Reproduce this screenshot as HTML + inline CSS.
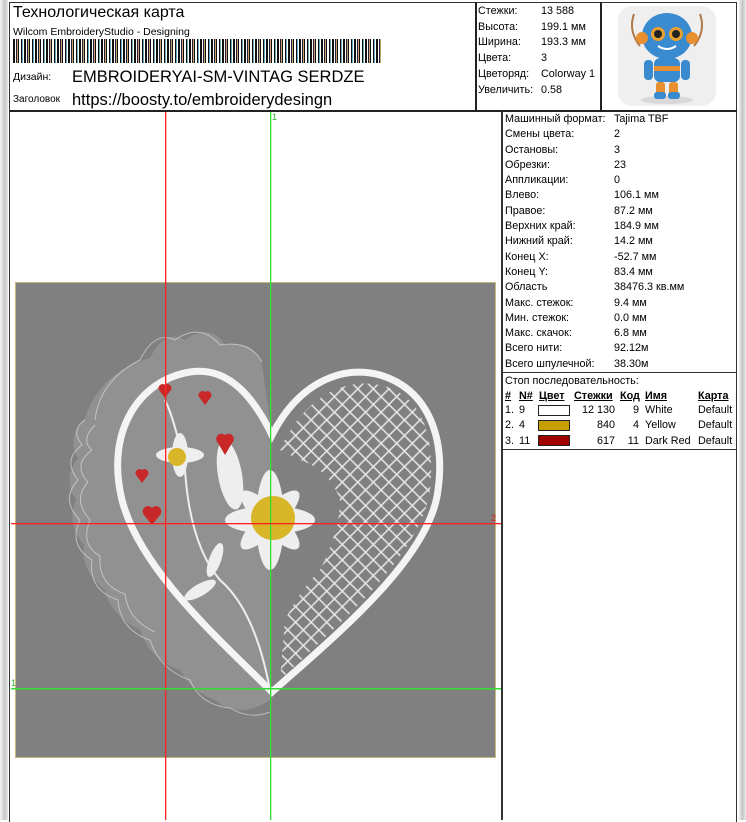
<!DOCTYPE html>
<html><head><meta charset="utf-8"><style>
*{margin:0;padding:0;box-sizing:border-box}
body{width:746px;height:820px;background:#fff;font-family:"Liberation Sans",Arial,sans-serif;color:#000;position:relative;overflow:hidden}
.abs{position:absolute}
.s{font-size:10.8px;line-height:15.3px;white-space:nowrap}
</style></head><body>
<div class="abs" style="left:0;top:0;width:8px;height:820px;background:linear-gradient(90deg,#f4f4f4,#c8c8c8 60%,#e8e8e8)"></div>
<div class="abs" style="left:739px;top:0;width:7px;height:820px;background:linear-gradient(90deg,#f0f0f0,#c4c4c4 50%,#ececec)"></div>
<div class="abs" style="left:9px;top:2px;width:728px;height:820px;border:1.5px solid #333;border-bottom:none"></div>
<div class="abs" style="left:9px;top:110px;width:728px;height:2px;background:#222"></div>
<div class="abs" style="left:475px;top:2px;width:2px;height:109px;background:#222"></div>
<div class="abs" style="left:600px;top:2px;width:1.5px;height:109px;background:#222"></div>
<div class="abs" style="left:501px;top:111px;width:1.5px;height:709px;background:#333"></div>
<div class="abs" style="left:502px;top:372px;width:235px;height:1px;background:#333"></div>
<div class="abs" style="left:502px;top:449px;width:235px;height:1px;background:#333"></div>

<div class="abs" style="left:13px;top:4px;font-size:16px">Технологическая карта</div>
<div class="abs" style="left:13px;top:26px;font-size:10.5px">Wilcom EmbroideryStudio - Designing</div>
<div class="abs" style="left:13px;top:39px;width:368px;height:24px;background:repeating-linear-gradient(90deg,#111 0 2px,#fff 2px 3px,#223 3px 4px,#c8a070 4px 5px,#111 5px 6px,#fff 6px 8px,#111 8px 9px,#6ab 9px 10px,#fff 10px 11px),repeating-linear-gradient(90deg,transparent 0 7px,#fff 7px 8px,transparent 8px 13px)"></div>
<div class="abs" style="left:13px;top:71px;font-size:10.5px">Дизайн:</div>
<div class="abs" style="left:72px;top:68px;font-size:16.5px">EMBROIDERYAI-SM-VINTAG SERDZE</div>
<div class="abs" style="left:13px;top:94px;font-size:10px">Заголовок</div>
<div class="abs" style="left:72px;top:91px;font-size:16.5px">https://boosty.to/embroiderydesingn</div>

<div class="abs s" style="left:478px;top:4px;line-height:15.7px">Стежки:<br>Высота:<br>Ширина:<br>Цвета:<br>Цветоряд:<br>Увеличить:</div>
<div class="abs s" style="left:541px;top:4px;line-height:15.7px">13 588<br>199.1 мм<br>193.3 мм<br>3<br>Colorway 1<br>0.58</div>

<svg class="abs" style="left:618px;top:6px" width="98" height="100" viewBox="0 0 98 100">
<rect x="0" y="0" width="98" height="100" rx="14" fill="#efefef"/>
<ellipse cx="49" cy="94" rx="26" ry="4" fill="#d8d8d8"/>
<path d="M22 40 Q10 25 16 8 M76 40 Q88 25 82 8" stroke="#b07848" stroke-width="2" fill="none"/>
<ellipse cx="49" cy="30" rx="25" ry="23" fill="#3a8ad0"/>
<circle cx="24" cy="32" r="6" fill="#e89030"/><circle cx="74" cy="32" r="6" fill="#e89030"/>
<circle cx="40" cy="28" r="7" fill="#e8a030"/><circle cx="58" cy="28" r="7" fill="#e8a030"/>
<circle cx="40" cy="28" r="4" fill="#222"/><circle cx="58" cy="28" r="4" fill="#222"/>
<path d="M40 40 Q49 46 58 40" stroke="#fff" stroke-width="2" fill="none"/>
<rect x="36" y="52" width="26" height="24" rx="6" fill="#3a8ad0"/>
<rect x="36" y="60" width="26" height="5" fill="#e89030"/>
<rect x="26" y="54" width="9" height="20" rx="4" fill="#3a8ad0"/><rect x="63" y="54" width="9" height="20" rx="4" fill="#3a8ad0"/>
<rect x="38" y="76" width="9" height="16" rx="3" fill="#e89030"/><rect x="51" y="76" width="9" height="16" rx="3" fill="#e89030"/>
<rect x="36" y="86" width="12" height="7" rx="3" fill="#3a8ad0"/><rect x="50" y="86" width="12" height="7" rx="3" fill="#3a8ad0"/>
</svg>

<div class="abs s" style="left:505px;top:112px">Машинный формат:<br>Смены цвета:<br>Остановы:<br>Обрезки:<br>Аппликации:<br>Влево:<br>Правое:<br>Верхних край:<br>Нижний край:<br>Конец X:<br>Конец Y:<br>Область<br>Макс. стежок:<br>Мин. стежок:<br>Макс. скачок:<br>Всего нити:<br>Всего шпулечной:</div>
<div class="abs s" style="left:614px;top:112px">Tajima TBF<br>2<br>3<br>23<br>0<br>106.1 мм<br>87.2 мм<br>184.9 мм<br>14.2 мм<br>-52.7 мм<br>83.4 мм<br>38476.3 кв.мм<br>9.4 мм<br>0.0 мм<br>6.8 мм<br>92.12м<br>38.30м</div>

<div class="abs s" style="left:505px;top:374px">Стоп последовательность:</div>
<div class="abs s" style="left:505px;top:389px;text-decoration:underline;font-weight:bold">#</div>
<div class="abs s" style="left:519px;top:389px;text-decoration:underline;font-weight:bold">N#</div>
<div class="abs s" style="left:539px;top:389px;text-decoration:underline;font-weight:bold">Цвет</div>
<div class="abs s" style="left:574px;top:389px;text-decoration:underline;font-weight:bold">Стежки</div>
<div class="abs s" style="left:620px;top:389px;text-decoration:underline;font-weight:bold">Код</div>
<div class="abs s" style="left:645px;top:389px;text-decoration:underline;font-weight:bold">Имя</div>
<div class="abs s" style="left:698px;top:389px;text-decoration:underline;font-weight:bold">Карта</div>
<div class="abs s" style="left:505px;top:403px">1.<br>2.<br>3.</div>
<div class="abs s" style="left:519px;top:403px">9<br>4<br>11</div>
<div class="abs" style="left:538px;top:405px;width:32px;height:11px;border:1px solid #222;background:#fff"></div>
<div class="abs" style="left:538px;top:420px;width:32px;height:11px;border:1px solid #222;background:#c79e00"></div>
<div class="abs" style="left:538px;top:435px;width:32px;height:11px;border:1px solid #222;background:#a00000"></div>
<div class="abs s" style="left:570px;top:403px;width:45px;text-align:right">12 130<br>840<br>617</div>
<div class="abs s" style="left:620px;top:403px;width:19px;text-align:right">9<br>4<br>11</div>
<div class="abs s" style="left:645px;top:403px">White<br>Yellow<br>Dark Red</div>
<div class="abs s" style="left:698px;top:403px">Default<br>Default<br>Default</div>

<svg class="abs" style="left:0;top:0" width="746" height="820">
<rect x="15.5" y="282.5" width="480" height="475" fill="#808080" stroke="#c8b880" stroke-width="1"/>
<path d="M85 418 Q100 372 150 358 Q165 328 185 340 Q210 322 225 345 Q255 340 262 365 L270 420 L270 700 Q240 720 215 700 Q190 690 180 670 Q150 660 140 630 Q110 615 105 590 Q80 570 84 545 Q66 525 76 500 Q62 478 78 458 Q66 438 85 418 Z" fill="#b8b8b8" opacity="0.3"/>
<g fill="none" stroke="#e4e4e4" stroke-width="1" opacity="0.6">
<path d="M85 420 Q70 430 82 445 Q62 460 78 480 Q60 500 80 520 Q68 545 92 560 Q88 590 118 600 Q120 630 150 640 Q160 670 190 680 Q200 705 230 708 Q250 720 270 712"/>
<path d="M95 425 Q80 440 92 450 Q72 465 88 482 Q72 500 90 520 Q80 545 100 556 Q98 585 125 594 Q128 620 155 632"/>
<path d="M95 420 Q100 380 140 360 Q155 330 175 340 Q200 322 220 345 Q250 340 262 362"/>
</g>
<path d="M272 435 C300 380 345 365 380 375 C430 390 445 440 438 490 C430 560 330 640 272 692 C220 640 140 570 122 500 C105 430 140 380 190 372 C230 366 255 400 272 435 Z" fill="none" stroke="#f4f4f4" stroke-width="7"/>
<defs><pattern id="net" width="11" height="11" patternUnits="userSpaceOnUse" patternTransform="rotate(45)"><rect width="11" height="11" fill="none" stroke="#e8e8e8" stroke-width="1.5"/></pattern></defs>
<path d="M280 450 C305 395 345 378 380 385 C425 395 435 440 430 490 C420 560 330 630 280 680 L285 620 Q300 590 320 570 Q340 530 340 500 Q330 470 300 460 Z" fill="url(#net)"/>
<g fill="#eee">
<ellipse cx="230" cy="475" rx="12" ry="35" transform="rotate(-10 230 475)"/>
<ellipse cx="270" cy="520" rx="45" ry="14"/>
<ellipse cx="270" cy="520" rx="14" ry="50"/>
<ellipse cx="270" cy="520" rx="40" ry="12" transform="rotate(45 270 520)"/>
<ellipse cx="270" cy="520" rx="40" ry="12" transform="rotate(-45 270 520)"/>
<ellipse cx="180" cy="455" rx="24" ry="8"/>
<ellipse cx="180" cy="455" rx="8" ry="22"/>
<ellipse cx="200" cy="590" rx="18" ry="6" transform="rotate(-30 200 590)"/>
<ellipse cx="215" cy="560" rx="6" ry="18" transform="rotate(20 215 560)"/>
</g>
<path d="M270 690 Q255 610 220 580 Q190 545 185 470 M185 470 Q175 420 165 400" stroke="#eee" stroke-width="2" fill="none"/>
<circle cx="273" cy="518" r="22" fill="#d8b628"/>
<circle cx="177" cy="457" r="9" fill="#d8b628"/>
<g fill="#c82828">
<path d="M165 398 l-6 -8 a4 4 0 0 1 6 -5 a4 4 0 0 1 6 5 z"/>
<path d="M205 405 l-6 -8 a4 4 0 0 1 6 -5 a4 4 0 0 1 6 5 z"/>
<path d="M225 455 l-7 -12 a5 5 0 0 1 7 -8 a5 5 0 0 1 7 8 z"/>
<path d="M142 483 l-6 -8 a4 4 0 0 1 6 -5 a4 4 0 0 1 6 5 z"/>
<path d="M152 525 l-8 -10 a5 5 0 0 1 8 -7 a5 5 0 0 1 8 7 z"/>
</g>
<rect x="165" y="112" width="1.3" height="708" fill="#ff2020"/>
<rect x="270" y="112" width="1.3" height="708" fill="#30e030"/>
<rect x="11" y="523" width="490" height="1.3" fill="#ff2020"/>
<rect x="11" y="688" width="490" height="1.5" fill="#30e030"/>
<text x="272" y="120" font-size="9" fill="#30b030" font-family="Liberation Sans">1</text>
<text x="491" y="521" font-size="9" fill="#e02020" font-family="Liberation Sans">2</text>
<text x="11" y="686" font-size="9" fill="#30b030" font-family="Liberation Sans">1</text>
</svg>
</body></html>
